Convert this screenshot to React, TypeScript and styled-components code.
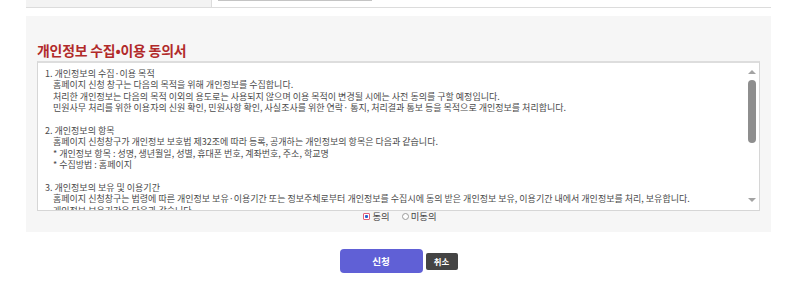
import React, { useState } from 'react';
import styled, { createGlobalStyle } from 'styled-components';

const GlobalStyle = createGlobalStyle`
  html, body {
    margin: 0;
    padding: 0;
    background: #fff;
    font-family: "Noto Sans CJK KR", "Noto Sans", sans-serif;
  }
`;

const sections = [
  {
    title: '1. 개인정보의 수집·이용 목적',
    lines: [
      '홈페이지 신청 창구는 다음의 목적을 위해 개인정보를 수집합니다.',
      '처리한 개인정보는 다음의 목적 이외의 용도로는 사용되지 않으며 이용 목적이 변경될 시에는 사전 동의를 구할 예정입니다.',
      '민원사무 처리를 위한 이용자의 신원 확인, 민원사항 확인, 사실조사를 위한 연락· 통지, 처리결과 통보 등을 목적으로 개인정보를 처리합니다.',
    ],
  },
  {
    title: '2. 개인정보의 항목',
    lines: [
      '홈페이지 신청창구가 개인정보 보호법 제32조에 따라 등록, 공개하는 개인정보의 항목은 다음과 같습니다.',
      '* 개인정보 항목 : 성명, 생년월일, 성별, 휴대폰 번호, 계좌번호, 주소, 학교명',
      '* 수집방법 : 홈페이지',
    ],
  },
  {
    title: '3. 개인정보의 보유 및 이용기간',
    lines: [
      '홈페이지 신청창구는 법령에 따른 개인정보 보유·이용기간 또는 정보주체로부터 개인정보를 수집시에 동의 받은 개인정보 보유, 이용기간 내에서 개인정보를 처리, 보유합니다.',
      '개인정보 보유기간은 다음과 같습니다.',
    ],
  },
];

const App = () => {
  const [agree, setAgree] = useState(true);

  return (
    <>
      <GlobalStyle />
      <Page>
        {/* 위쪽 표의 마지막 줄 */}
        <TopRow>
          <LabelCell />
          <ValueCell>
            <InputEdge />
          </ValueCell>
        </TopRow>

        <Panel>
          <Title>개인정보 수집•이용 동의서</Title>
          <TermsBox>
            <TermsText>
              {sections.map((s, i) => (
                <Section key={i}>
                  <Line>{s.title}</Line>
                  {s.lines.map((l, j) => (
                    <Line key={j} $indent>
                      {l}
                    </Line>
                  ))}
                </Section>
              ))}
            </TermsText>
            <ScrollTrack>
              <Arrow $up />
              <Thumb />
              <Arrow />
            </ScrollTrack>
          </TermsBox>
          <RadioRow>
            <RadioLabel onClick={() => setAgree(true)}>
              <CheckMark $checked={agree} />
              동의
            </RadioLabel>
            <RadioLabel onClick={() => setAgree(false)}>
              <CheckMark $checked={!agree} />
              미동의
            </RadioLabel>
          </RadioRow>
        </Panel>

        <ButtonRow>
          <SubmitButton>신청</SubmitButton>
          <CancelButton>취소</CancelButton>
        </ButtonRow>
      </Page>
    </>
  );
};

export default App;

const Page = styled.div`
  width: 745px;
  margin: 0 0 0 26px;
`;

const TopRow = styled.div`
  display: flex;
  height: 7px;
  border-bottom: 1px solid #dcdcdc;
`;

const LabelCell = styled.div`
  width: 185px;
  background-color: #f3f3f3;
  border-right: 1px solid #dcdcdc;
`;

const ValueCell = styled.div`
  flex: 1;
  padding-left: 6px;
`;

const InputEdge = styled.div`
  width: 154px;
  height: 1px;
  background-color: #c4c4c4;
`;

const Panel = styled.div`
  margin-top: 8px;
  background-color: #f6f6f6;
  padding: 25px 11px 11px 11px;
`;

const Title = styled.h3`
  margin: 0 0 2px 0;
  font-size: 13.9px;
  line-height: 18px;
  font-weight: bold;
  color: #b12a2a;
  letter-spacing: -0.2px;
`;

const TermsBox = styled.div`
  display: flex;
  height: 150px;
  box-sizing: border-box;
  background-color: #fff;
  border: 1px solid #d6d6d6;
  border-top: 2px solid #dddddd;
`;

const TermsText = styled.div`
  flex: 1;
  overflow: hidden;
  padding: 5px 0 0 7px;
  font-size: 9px;
  line-height: 11.4px;
  color: #4a4a4a;
`;

const Section = styled.div`
  margin-bottom: 11.4px;
`;

const Line = styled.div<{ $indent?: boolean }>`
  padding-left: ${(p) => (p.$indent ? '8px' : '0')};
  white-space: nowrap;
`;

const ScrollTrack = styled.div`
  width: 14px;
  display: flex;
  flex-direction: column;
  align-items: center;
  padding: 7px 0 8px 0;
  box-sizing: border-box;
`;

const Arrow = styled.div<{ $up?: boolean }>`
  width: 0;
  height: 0;
  border-left: 4px solid transparent;
  border-right: 4px solid transparent;
  ${(p) =>
    p.$up
      ? 'border-bottom: 4px solid #a3a3a3; margin-bottom: 6px;'
      : 'border-top: 4px solid #a3a3a3; margin-top: auto;'}
`;

const Thumb = styled.div`
  width: 8px;
  height: 63px;
  border-radius: 4px;
  background-color: #8e8e8e;
`;

const RadioRow = styled.div`
  display: flex;
  justify-content: center;
  gap: 12px;
  height: 10px;
  padding-left: 3px;
`;

const RadioLabel = styled.label`
  display: flex;
  align-items: center;
  gap: 2px;
  font-size: 9.4px;
  line-height: 10px;
  color: #444;
  cursor: pointer;
`;

const CheckMark = styled.span<{ $checked: boolean }>`
  width: 7px;
  height: 7px;
  box-sizing: border-box;
  border: 1px solid ${(p) => (p.$checked ? '#e0607c' : '#9a9a9a')};
  border-radius: ${(p) => (p.$checked ? '1px' : '50%')};
  background-color: #fff;
  display: flex;
  align-items: center;
  justify-content: center;
  &::after {
    content: '';
    width: 3px;
    height: 3px;
    border-radius: 1px;
    background-color: ${(p) => (p.$checked ? '#2b5fd0' : 'transparent')};
  }
`;

const ButtonRow = styled.div`
  display: flex;
  justify-content: center;
  align-items: center;
  gap: 3px;
  margin-top: 17px;
`;

const SubmitButton = styled.button`
  width: 83px;
  height: 24px;
  border: none;
  border-radius: 4px;
  background-color: #6060d6;
  color: #fff;
  font-family: inherit;
  font-size: 9.6px;
  font-weight: bold;
  cursor: pointer;
`;

const CancelButton = styled.button`
  width: 32px;
  height: 17px;
  padding: 0;
  border: none;
  border-radius: 2px;
  background-color: #444;
  color: #fff;
  font-family: inherit;
  font-size: 8.4px;
  font-weight: bold;
  cursor: pointer;
`;
